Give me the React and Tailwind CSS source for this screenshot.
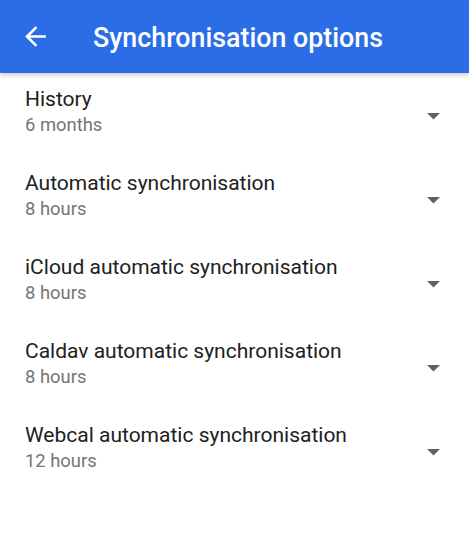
export default function App() {
  const rows = [
    ["History", "6 months"],
    ["Automatic synchronisation", "8 hours"],
    ["iCloud automatic synchronisation", "8 hours"],
    ["Caldav automatic synchronisation", "8 hours"],
    ["Webcal automatic synchronisation", "12 hours"],
  ];
  return (
    <div className="w-[469px] h-[540px] bg-white overflow-hidden" style={{ fontFamily: "Roboto, sans-serif" }}>
      <div className="relative z-10 h-[73px] bg-[#2a6de6] flex items-center shadow-[0_2px_5px_rgba(0,0,0,0.22)]">
        <div className="w-[93px] pl-[20px] flex items-center">
          <svg width="31" height="31" viewBox="0 0 24 24" fill="white">
            <path d="M20 11H7.83l5.59-5.59L12 4l-8 8 8 8 1.41-1.41L7.83 13H20v-2z" />
          </svg>
        </div>
        <div className="text-white text-[26.8px] font-medium leading-none mt-[3px]">Synchronisation options</div>
      </div>
      <div className="flex flex-col">
        {rows.map(([t, s]) => (
          <div key={t} className="h-[84px] flex items-center pl-[25px] pr-[29px]">
            <div className="flex-1 flex flex-col">
              <div className="text-[21px] text-[#212121] leading-[26px] mt-[-7px]">{t}</div>
              <div className="text-[18.4px] text-[#757575] leading-[26px]">{s}</div>
            </div>
            <svg width="13" height="7" viewBox="0 0 13 7" className="mt-[2px]">
              <path d="M0 0H13L6.5 6.5Z" fill="#616161" />
            </svg>
          </div>
        ))}
      </div>
    </div>
  );
}
